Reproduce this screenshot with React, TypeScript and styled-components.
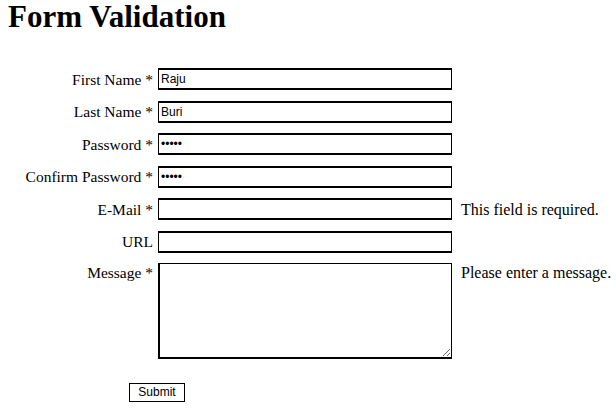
import React from 'react';
import styled, { createGlobalStyle } from 'styled-components';

const GlobalStyle = createGlobalStyle`
  html, body {
    margin: 0;
    background: #fff;
    color: #000;
    font-family: "Liberation Serif", "Times New Roman", serif;
  }
`;

const Page = styled.div`
  padding: 0 8px;
`;

const Title = styled.h1`
  margin: 0;
  font-size: 31px;
  line-height: 34px;
  font-weight: 700;
`;

const Form = styled.form`
  display: grid;
  grid-template-columns: 145px 294px auto;
  column-gap: 5px;
  row-gap: 10.5px;
  margin-top: 34px;
  font-size: 15.5px;
`;

const Label = styled.label<{ $top?: boolean }>`
  justify-self: end;
  align-self: ${(p) => (p.$top ? 'start' : 'center')};
  white-space: nowrap;
  line-height: 17px;
  margin-top: ${(p) => (p.$top ? '1px' : '0')};
`;

const Field = styled.input`
  box-sizing: border-box;
  width: 294px;
  height: 22px;
  margin: 0;
  padding: 1px 2px;
  border-style: solid;
  border-color: #000;
  border-width: 2px 1px 2px 1px;
  font-family: "Liberation Sans", Arial, sans-serif;
  font-size: 12px;
  color: #000;
  outline: none;
`;

const Area = styled.textarea`
  box-sizing: border-box;
  width: 294px;
  height: 96px;
  margin: 0;
  padding: 2px;
  border-style: solid;
  border-color: #000;
  border-width: 1px 1px 2px 2px;
  font-family: "Liberation Sans", Arial, sans-serif;
  font-size: 12px;
  outline: none;
`;

const Error = styled.span<{ $top?: boolean }>`
  align-self: ${(p) => (p.$top ? 'start' : 'center')};
  margin-left: 4px;
  white-space: nowrap;
  font-size: 16px;
  line-height: 17px;
  margin-top: ${(p) => (p.$top ? '1px' : '0')};
`;

const Actions = styled.div`
  grid-column: 1 / -1;
  padding-left: 121px;
  margin-top: 12.5px;
`;

const SubmitButton = styled.button`
  box-sizing: border-box;
  width: 56px;
  height: 19px;
  padding: 0;
  border: 1px solid #000;
  background: #fff;
  font-family: "Liberation Sans", Arial, sans-serif;
  font-size: 12px;
  color: #000;
`;

const App: React.FC = () => {
  return (
    <Page>
      <GlobalStyle />
      <Title>Form Validation</Title>
      <Form onSubmit={(e) => e.preventDefault()}>
        <Label htmlFor="fname">First Name *</Label>
        <Field id="fname" type="text" defaultValue="Raju" />
        <span />

        <Label htmlFor="lname">Last Name *</Label>
        <Field id="lname" type="text" defaultValue="Buri" />
        <span />

        <Label htmlFor="pwd">Password *</Label>
        <Field id="pwd" type="password" defaultValue="12345" />
        <span />

        <Label htmlFor="cpwd">Confirm Password *</Label>
        <Field id="cpwd" type="password" defaultValue="12345" />
        <span />

        <Label htmlFor="email">E-Mail *</Label>
        <Field id="email" type="text" />
        <Error>This field is required.</Error>

        <Label htmlFor="url">URL</Label>
        <Field id="url" type="text" />
        <span />

        <Label htmlFor="msg" $top>Message *</Label>
        <Area id="msg" />
        <Error $top>Please enter a message.</Error>

        <Actions>
          <SubmitButton type="submit">Submit</SubmitButton>
        </Actions>
      </Form>
    </Page>
  );
};

export default App;
